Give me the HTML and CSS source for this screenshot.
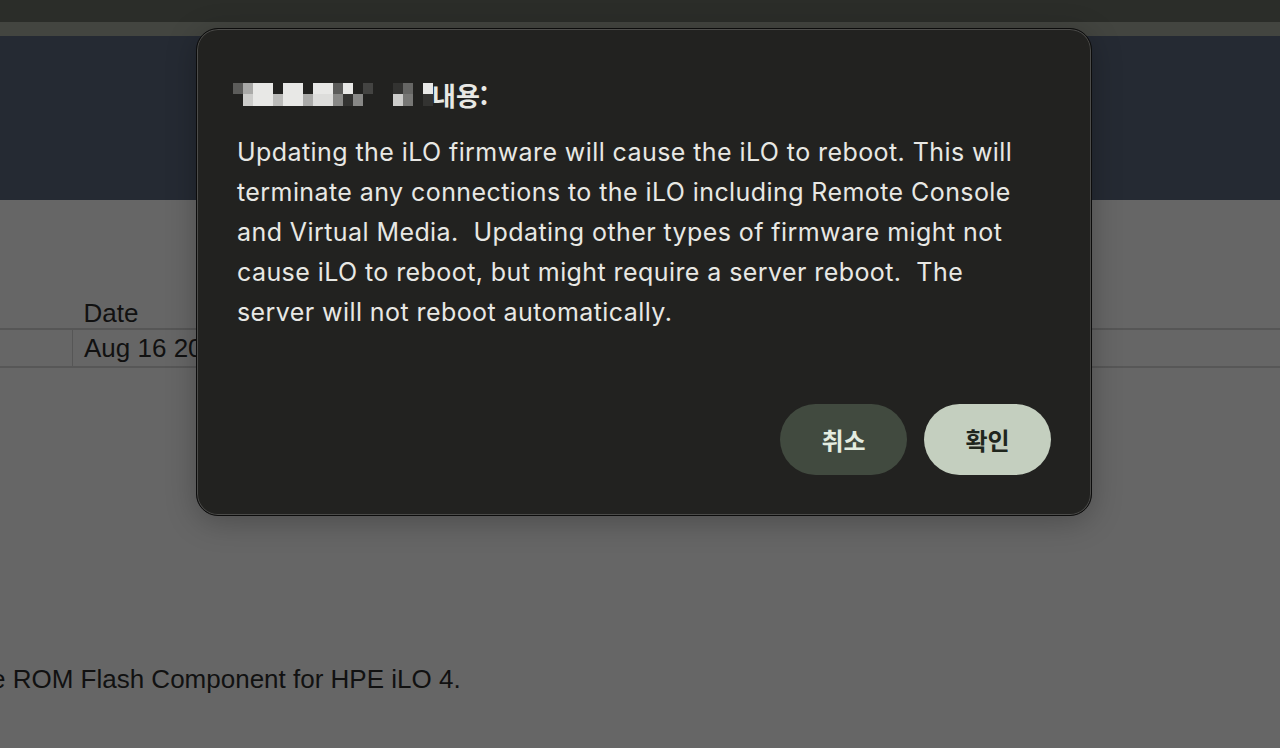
FILE: index.html
```html
<!DOCTYPE html>
<html lang="ko">
<head>
<meta charset="utf-8">
<title>iLO Firmware Update</title>
<link rel="stylesheet" href="styles.css">
</head>
<body>
<div class="page">
  <div class="topbar"></div>
  <div class="strip"></div>
  <div class="header"></div>
  <main class="main">
    <table class="fw-table">
      <thead>
        <tr><th class="c1"></th><th class="c2">Date</th><th class="c3"></th></tr>
      </thead>
      <tbody>
        <tr><td class="c1"></td><td class="c2">Aug 16 2017</td><td class="c3"></td></tr>
      </tbody>
    </table>
    <p class="desc">e ROM Flash Component for HPE iLO 4.</p>
  </main>

  <div class="dialog" role="dialog">
    <div class="dlg-title">
      <span class="mosaic">
        <span class="mrow">
          <i class="m5"></i><i class="ma"></i><i class="me"></i><i class="me"></i><i class="mb"></i><i class="me"></i><i class="me"></i><i class="mb"></i><i class="me"></i><i class="me"></i><i class="m5"></i><i class="me"></i><i class="mb"></i><i class="m4"></i><i class="mb"></i><i class="mb"></i><i class="m3"></i><i class="m6"></i><i class="mb"></i><i class="me"></i>
        </span>
        <span class="mrow">
          <i class="mb"></i><i class="mc"></i><i class="me"></i><i class="me"></i><i class="mbb"></i><i class="me"></i><i class="me"></i><i class="ma"></i><i class="md"></i><i class="md"></i><i class="m8"></i><i class="m3"></i><i class="m8"></i><i class="mb"></i><i class="mb"></i><i class="mb"></i><i class="mc"></i><i class="m7"></i><i class="mb"></i><i class="m3"></i>
        </span>
      </span>
      <span class="ttl">내용:</span>
    </div>
    <p class="dlg-body">Updating the iLO firmware will cause the iLO to reboot. This will terminate any connections to the iLO including Remote Console and Virtual Media.&nbsp; Updating other types of firmware might not cause iLO to reboot, but might require a server reboot.&nbsp; The server will not reboot automatically.</p>
    <div class="dlg-actions">
      <button class="btn btn-cancel">취소</button>
      <button class="btn btn-ok">확인</button>
    </div>
  </div>
</div>
</body>
</html>
```

FILE: styles.css
```css
html, body {
  margin: 0;
  padding: 0;
  background: #666666;
  overflow: hidden;
}
.page {
  position: relative;
  width: 1280px;
  height: 748px;
  display: flex;
  flex-direction: column;
  font-family: "Liberation Sans", Arial, sans-serif;
}
.topbar {
  height: 22px;
  background: #2b2d29;
}
.strip {
  height: 14px;
  background: #434540;
}
.header {
  height: 164px;
  background: #252a33;
}
.main {
  flex: 1;
  background: #666666;
  padding-top: 93px;
  color: #111;
}
.fw-table {
  border-collapse: collapse;
  width: 100%;
  font-size: 26px;
}
.fw-table th {
  text-align: left;
  font-weight: normal;
  height: 35px;
  padding: 0 11px;
  vertical-align: bottom;
  border-bottom: 2px solid #565656;
  line-height: 30px;
}
.fw-table td {
  height: 36px;
  padding: 0 11px;
  border-bottom: 2px solid #575757;
  line-height: 30px;
}
.fw-table .c1 { width: 50px; }
.fw-table td.c1 { border-right: 1px solid #565656; }
.fw-table .c2 { width: 400px; }
.desc {
  margin: 296px 0 0;
  font-size: 26px;
  text-indent: -9px;
  white-space: nowrap;
}

.dialog {
  position: absolute;
  left: 196px;
  top: 28px;
  width: 896px;
  height: 488px;
  box-sizing: border-box;
  background: #222220;
  border-radius: 22px;
  border: 1px solid #0c0c0c;
  box-shadow: inset 0 0 0 1px #4c4c4a, 0 6px 30px rgba(0,0,0,0.25);
  padding: 46px 52px 40px 40px;
  display: flex;
  flex-direction: column;
  color: #e8e8e4;
  font-family: Inter, "Noto Sans CJK KR", sans-serif;
}
.dlg-title {
  display: flex;
  align-items: center;
  height: 38px;
  gap: 4px;
}
.mosaic {
  display: flex;
  flex-direction: column;
  margin-left: -4px;
}
.mrow {
  display: flex;
}
.mrow i {
  display: block;
  width: 10px;
  height: 11px;
  background: #222220;
}
.mrow + .mrow i { height: 12px; }
.mrow i.m3 { background: #333331; }
.mrow i.m4 { background: #444442; }
.mrow i.m5 { background: #5c5c5a; }
.mrow i.m6 { background: #666664; }
.mrow i.m7 { background: #777775; }
.mrow i.m8 { background: #888886; }
.mrow i.ma { background: #aaaaa8; }
.mrow i.mbb { background: #bbbbb9; }
.mrow i.mc { background: #cccccA; }
.mrow i.md { background: #dddddb; }
.mrow i.me { background: #e8e8e6; }
.mrow i.mb { background: #222220; }
.ttl {
  font-family: "Noto Sans CJK KR", sans-serif;
  font-weight: 700;
  font-size: 26px;
  margin-left: -5px;
}
.dlg-body {
  margin: 19px 0 0;
  font-size: 25px;
  line-height: 40px;
  letter-spacing: 0.42px;
}
.dlg-actions {
  margin-top: auto;
  display: flex;
  justify-content: flex-end;
  gap: 17px;
  margin-right: -12px;
}
.btn {
  width: 127px;
  height: 71px;
  border: none;
  border-radius: 36px;
  font-family: "Noto Sans CJK KR", sans-serif;
  font-weight: 700;
  font-size: 24px;
  padding: 0;
}
.btn-cancel {
  background: #414a3f;
  color: #e4ece0;
}
.btn-ok {
  background: #c4cfbf;
  color: #1f261d;
}
```
